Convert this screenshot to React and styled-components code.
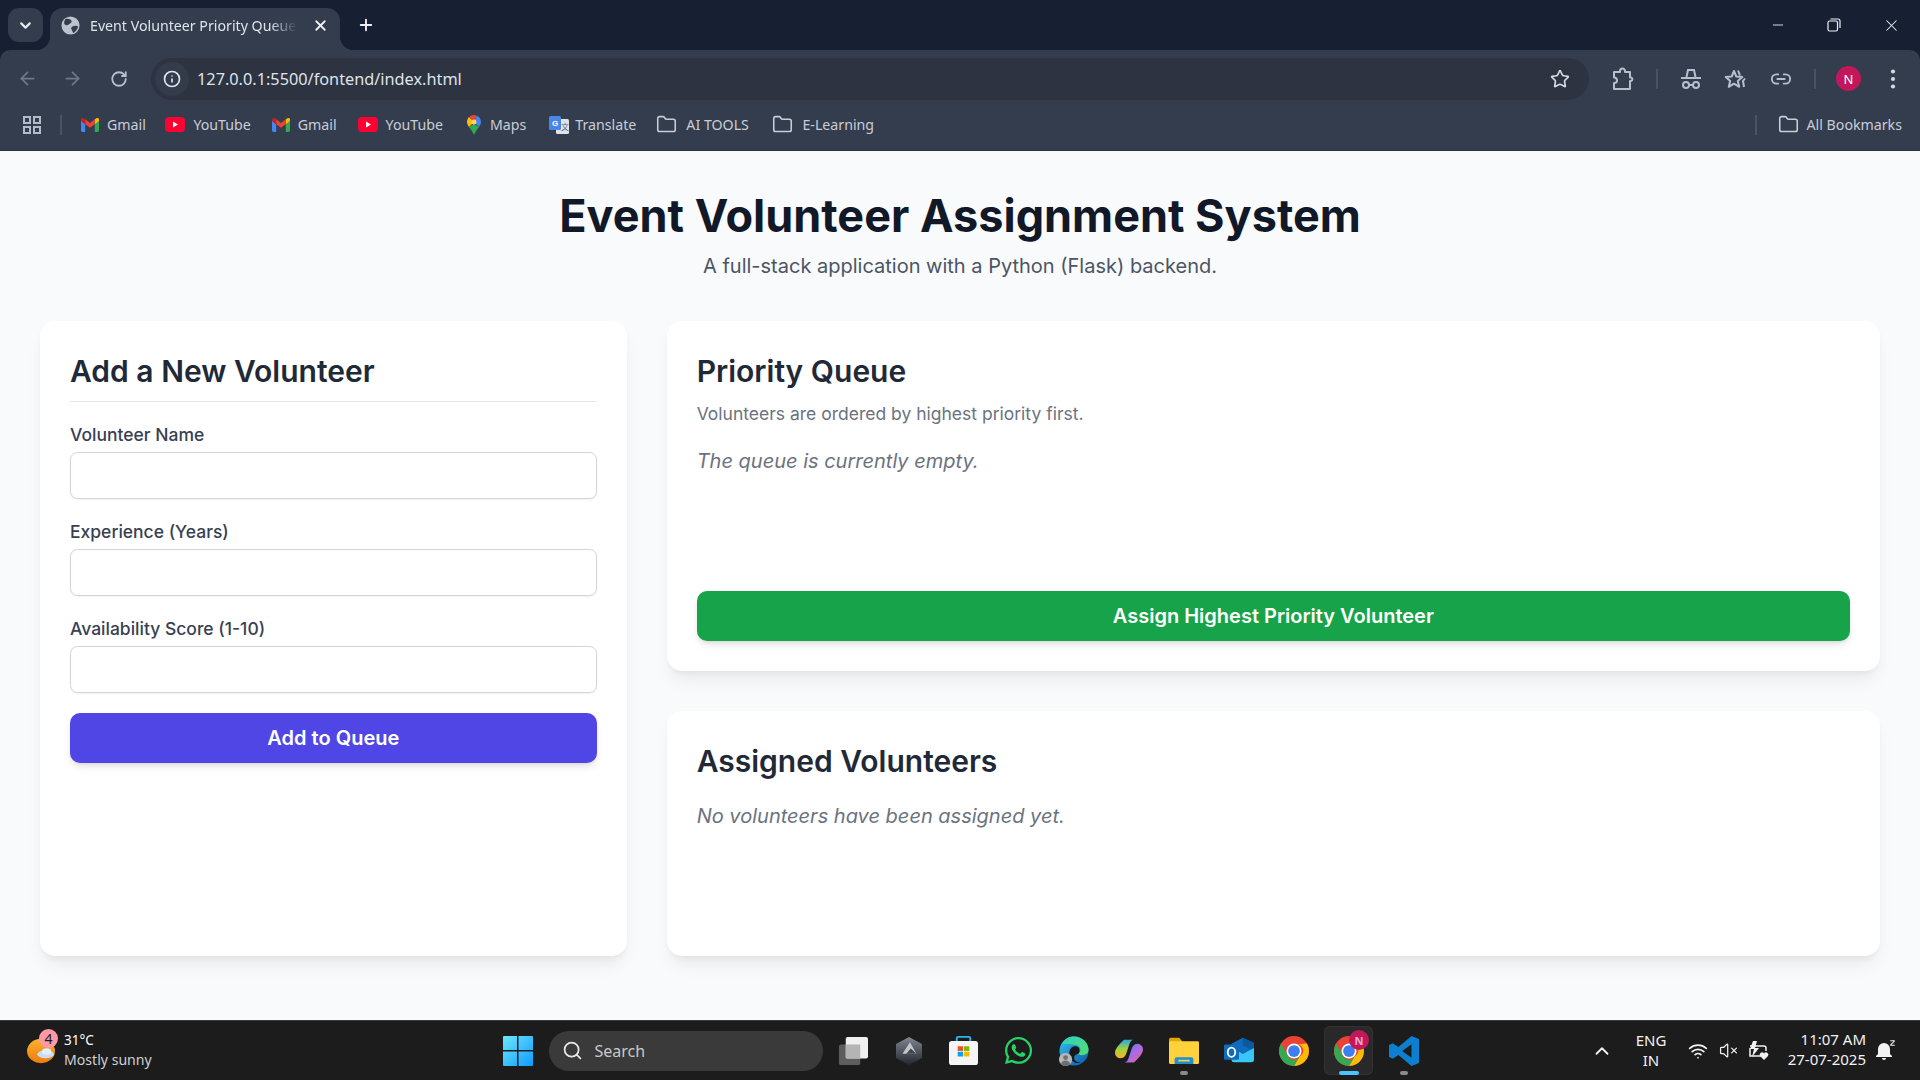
import React from "react";
import styled, { createGlobalStyle } from "styled-components";
import { ArrowLeft, ArrowRight, RotateCw, Info, Star, Link2, X, Plus, ChevronDown, ChevronUp, Minus, Search, Wifi, VolumeX, Folder } from "lucide-react";
import { FaWhatsapp } from "react-icons/fa";

const Global = createGlobalStyle`
  html, body { margin: 0; padding: 0; height: 100%; overflow: hidden; }
  * { box-sizing: border-box; }
  #root { height: 100%; }
`;

const Screen = styled.div`
  width: 1920px; height: 1080px; display: flex; flex-direction: column; overflow: hidden;
  background: #f9fafb; font-family: Inter, "Liberation Sans", sans-serif;
`;

/* browser chrome */
const BrowserFrame = styled.div`
  flex: none; background: #172033; display: flex; flex-direction: column;
`;
const TabStrip = styled.div`
  height: 50px; flex: none; display: flex; align-items: flex-end; padding-left: 8px;
  font-family: "Noto Sans", "Open Sans", sans-serif;
`;
const TabSearch = styled.button`
  width: 35px; height: 34px; margin-bottom: 8px; border: 0; border-radius: 11px; background: #343d4e; color: #e6e9ef;
  display: flex; align-items: center; justify-content: center; padding: 0;
`;
const Tab = styled.div`
  position: relative; width: 290px; height: 42px; margin-left: 7px; background: #343d4e; border-radius: 13px 13px 0 0;
  display: flex; align-items: center; padding: 0 11px 8px 11px; color: #dfe3ea; font-size: 14.2px;
  &::before, &::after { content: ""; position: absolute; bottom: 0; width: 14px; height: 14px; }
  &::before { left: -14px; background: radial-gradient(circle at 0 0, transparent 14px, #343d4e 14.5px); }
  &::after { right: -14px; background: radial-gradient(circle at 100% 0, transparent 14px, #343d4e 14.5px); }
`;
const TabTitle = styled.span`
  flex: 1; margin-left: 10px; margin-right: 8px; white-space: nowrap; overflow: hidden;
  -webkit-mask-image: linear-gradient(90deg, #000 84%, transparent 97%);
  mask-image: linear-gradient(90deg, #000 84%, transparent 97%);
`;
const NewTab = styled.div`
  margin: 0 0 10px 16px; width: 20px; height: 30px; display: flex; align-items: center; justify-content: center; color: #eef0f4;
`;
const WindowControls = styled.div`
  margin-left: auto; height: 50px; display: flex; align-items: center; padding-right: 19px; gap: 41px; color: #f2f4f7;
`;
const Toolbar = styled.div`
  height: 51px; flex: none; background: #343d4e; display: flex; align-items: center; padding: 6px 0 0 15.5px;
  border-radius: 10px 10px 0 0; color: #aeb6c4; font-family: "Noto Sans", sans-serif;
`;
const NavButton = styled.div`
  width: 24px; margin-left: ${p => p.$ml || 0}px; height: 24px; display: flex; align-items: center; justify-content: center;
  flex: none; color: ${p => p.$dim ? "#6f7889" : "#b7bfcc"};
`;
const Omnibox = styled.div`
  width: 1438px; height: 42px; margin-left: 20.5px; flex: none; border-radius: 21px; background: #2d3341; display: flex; align-items: center; padding: 0 17px 0 4px;
`;
const InfoBadge = styled.div`
  width: 34px; height: 34px; border-radius: 50%; background: #343b4a; margin-right: 8px; display: flex; align-items: center; justify-content: center; color: #e3e6ec; flex: none;
`;
const Url = styled.span`
  color: #dfe3ea; font-size: 16.3px; flex: 1; white-space: nowrap;
`;
const Divider = styled.div`
  width: 2px; height: ${p => p.$h || 20}px; background: #4a5264; flex: none; margin: ${p => p.$m || "0"};
`;
const Avatar = styled.div`
  width: 25px; height: 25px; border-radius: 50%; background: #c2185b; color: #fff; font-size: 13px; display: flex; align-items: center; justify-content: center;
  flex: none;
`;
const BookmarksBar = styled.div`
  height: 50px; flex: none; background: #343d4e; display: flex; align-items: center; padding: 0 18px 2px 22px; color: #c8cdd6;
  font-family: "Noto Sans", sans-serif; font-size: 14.2px; border-bottom: 1px solid #2d3341;
`;
const Bookmark = styled.div`
  display: flex; align-items: center; gap: ${p => p.$gap || 8}px; margin-left: ${p => p.$ml || 0}px; white-space: nowrap; flex: none;
`;
const Spacer = styled.div`flex: 1;`;

/* page */
const Page = styled.main`
  flex: 1; min-height: 0; padding: 40px 40px 0; background: #f9fafb; color: #1f2937;
`;
const Header = styled.header`
  text-align: center; margin-bottom: 40px;
`;
const Title = styled.h1`
  margin: 0; font-size: 45px; line-height: 50px; font-weight: 700; color: #111827;
`;
const Subtitle = styled.p`
  margin: 10px 0 0; font-size: 20px; line-height: 30px; color: #4b5563;
`;
const Grid = styled.div`
  display: grid; grid-template-columns: repeat(3, 1fr); gap: 40px;
`;
const Card = styled.section`
  background: #fff; border-radius: 15px; padding: 30px; box-shadow: 0 12px 18px -4px rgba(0,0,0,.07), 0 4px 7px -3px rgba(0,0,0,.06);
  min-height: ${p => p.$minH || 0}px; display: flex; flex-direction: column;
`;
const Column = styled.div`
  grid-column: span 2; display: flex; flex-direction: column; gap: 40px;
`;
const CardTitle = styled.h2`
  margin: 0 0 ${p => p.$mb ?? 10}px; font-size: 30px; line-height: 40px; font-weight: 600; color: #1f2937;
  ${p => p.$ruled && "padding-bottom: 10px; border-bottom: 1.25px solid #e5e7eb; margin-bottom: 20px;"}
`;
const Form = styled.form`
  display: flex; flex-direction: column; gap: 20px;
`;
const Field = styled.div`
  display: flex; flex-direction: column; gap: 5px;
`;
const Label = styled.label`
  font-size: 17.5px; line-height: 25px; font-weight: 500; color: #374151;
`;
const Input = styled.input`
  height: 47px; width: 100%; border: 1.25px solid #d1d5db; border-radius: 7.5px; background: #fff;
  box-shadow: 0 1px 2px rgba(0,0,0,.05);
`;
const ActionButton = styled.button`
  height: 50px; width: 100%; border: 0; border-radius: 10px; background: ${p => p.$bg}; color: #fff; font-family: inherit;
  font-size: 20px; font-weight: 600; box-shadow: 0 5px 8px -2px rgba(0,0,0,.12), 0 2px 4px -2px rgba(0,0,0,.1); flex: none;
  margin-top: ${p => p.$mt || 0}px;
`;
const Hint = styled.p`
  margin: 0; font-size: 17.5px; line-height: 25px; color: #6b7280;
`;
const Empty = styled.p`
  margin: ${p => p.$mt || 0}px 0 0; font-size: 20px; line-height: 30px; font-style: italic; color: #6b7280;
`;

/* taskbar */
const Taskbar = styled.footer`
  height: 60px; flex: none; background: #1c1c1c; border-top: 1px solid #3a3a3a; display: flex; align-items: center; color: #fff;
  font-family: "Noto Sans", "Open Sans", sans-serif; padding-left: 27px;
`;
const Weather = styled.div`
  width: 475.5px; flex: none; display: flex; align-items: center; gap: 9px; position: relative;
`;
const WeatherBadge = styled.span`
  position: absolute; left: 12px; top: -3px; width: 19px; height: 19px; border-radius: 50%; background: #ff99a4; color: #1c1c1c; font-size: 14px;
  display: flex; align-items: center; justify-content: center;
`;
const WeatherText = styled.div`
  display: flex; flex-direction: column; font-size: 14.1px; line-height: 20px; color: #cfcfcf; margin-top: -2px;
  b { font-weight: 400; color: #fff; font-size: 13.5px; }
`;
const StartIcon = styled.div`
  width: 30px; height: 30px; flex: none; display: flex; margin-right: 16px;
`;
const SearchPill = styled.div`
  width: 274px; height: 40px; border-radius: 20px; background: #3a3a3a; display: flex; align-items: center; gap: 12px; padding-left: 13px;
  color: #c9c9c9; font-size: 16px; flex: none; margin-right: .5px;
`;
const TaskItem = styled.div`
  position: relative; width: 49px; height: 49px; margin-left: 6px; flex: none; display: flex; align-items: center; justify-content: center; border-radius: 6px;
  background: ${p => p.$active ? "#292929" : "transparent"};
  ${p => p.$active && "box-shadow: inset 0 0 0 1px #323232;"}
  ${p => (p.$active || p.$running) && `
    &::after { content: ""; position: absolute; bottom: 0; left: 50%; transform: translateX(-50%); height: 4px; border-radius: 2px;
      width: ${p.$active ? 20 : 8}px; background: ${p.$active ? "#4cc2ff" : "#8a8a8a"}; }
  `}
`;
const TaskBadge = styled.span`
  position: absolute; right: 4px; top: 4px; width: 20px; height: 20px; border-radius: 50%; background: #c2185b; color: #f5a9c6; font-size: 11px; font-weight: 700;
  display: flex; align-items: center; justify-content: center;
`;
const Tray = styled.div`
  margin-left: auto; display: flex; align-items: center; padding-right: 24px; color: #f2f2f2;
`;
const Lang = styled.div`
  width: 40px; margin: -2px 14px 0 17px; text-align: center; font-size: 15px; line-height: 20px;
`;
const Clock = styled.div`
  width: 84px; margin: -4px 10px 0 11px; text-align: right; font-size: 15px; line-height: 20px; white-space: nowrap;
`;
const TrayIcon = styled.div`
  width: ${p => p.$w || 24}px; margin-right: ${p => p.$mr || 0}px; display: flex; align-items: center; justify-content: center; flex: none;
`;

/* drawings */
const Globe = () => (
  <svg width="19" height="19" viewBox="0 0 20 20">
    <circle cx="10" cy="10" r="9.5" fill="#bcc3cf" />
    <path d="M5 3c2 0 5 0 6 2s-2 3-3 4-3 1-4 0-1-4 1-6zM12 11c2-1 5-1 6 0-.5 3-3 6-5 7-1-1-1-3-2-4s0-2 1-3z" fill="#343d4e" />
  </svg>
);
const Gmail = () => (
  <svg width="18" height="14" viewBox="0 0 18 14">
    <path d="M0 2.500V12.600c0 .8.6 1.400 1.300 1.400h2.900V6.200z" fill="#4285f4" />
    <path d="M13.800 6.200V14h2.900c.7 0 1.300-.6 1.300-1.400V2.500z" fill="#34a853" />
    <path d="M13.800 1.200v5L18 2.900V1.600C18 .2 16.500-.5 15.500.3z" fill="#fbbc04" />
    <path d="M4.200 6.200V1.200L9 4.900l4.800-3.700v5L9 9.800z" fill="#ea4335" />
    <path d="M0 1.600v1.300l4.200 3.300v-5L2.500.3C1.500-.5 0 .2 0 1.600z" fill="#c5221f" />
  </svg>
);
const YouTube = () => (
  <svg width="20" height="15" viewBox="0 0 20 15">
    <rect width="20" height="15" rx="4" fill="#ff0033" />
    <path d="M8 4.500v6l5-3z" fill="#fff" />
  </svg>
);
const Maps = () => (
  <svg width="14" height="20" viewBox="0 0 14 20">
    <path d="M7 20c-1-3-3-5-5-8l5-3 5 3c-2 3-4 5-5 8z" fill="#34a853" />
    <path d="M2 12C.6 10 0 8.500 0 7c0-2 .8-3.600 2-4.900L7 7z" fill="#fbbc04" />
    <path d="M2 2.100C3.300.8 5 0 7 0c1 0 2 .2 3 .7L7 7z" fill="#ea4335" />
    <path d="M10 .7C12.400 1.800 14 4.200 14 7c0 1.800-1 3.400-2 5L7 7z" fill="#4285f4" />
    <circle cx="7" cy="7" r="2.500" fill="#fdd663" />
  </svg>
);
const Translate = () => (
  <svg width="20" height="20" viewBox="0 0 20 20">
    <rect x="7" y="4" width="13" height="15" rx="1.500" fill="#dfe3ea" />
    <rect x="0" y="1" width="12" height="14" rx="1.500" fill="#4a86e8" />
    <text x="3" y="11" fontSize="8" fontWeight="700" fill="#fff" fontFamily="Liberation Sans, sans-serif">G</text>
    <text x="12" y="15" fontSize="8" fill="#5f6368" fontFamily="Noto Sans CJK SC, sans-serif">文</text>
  </svg>
);
const AppsGrid = () => (
  <svg width="20" height="20" viewBox="0 0 20 20" fill="none" stroke="#b4bbc8" strokeWidth="2">
    <rect x="2" y="2" width="6" height="6" /><rect x="12" y="2" width="6" height="6" />
    <rect x="2" y="12" width="6" height="6" /><rect x="12" y="12" width="6" height="6" />
  </svg>
);
const Extension = () => (
  <svg width="22" height="24" viewBox="0 0 22 24" fill="none" stroke="#b7bfcc" strokeWidth="2" strokeLinejoin="round">
    <path d="M2 5h6V4a2.500 2.500 0 0 1 5 0v1h5v5.500h1a1.800 1.800 0 0 1 0 3.500h-1v8H2v-6c2 0 3-1 3-2.500S4 10.500 2 10.500z" />
  </svg>
);
const Incognito = () => (
  <svg width="22" height="22" viewBox="0 0 22 22" fill="none" stroke="#b7bfcc" strokeWidth="2">
    <path d="M6.500 9l1.500-7h6l1.500 7" />
    <path d="M1 10h20" /><circle cx="6" cy="17" r="3" /><circle cx="16" cy="17" r="3" /><path d="M9 17h4" />
  </svg>
);
const FavStar = () => (
  <svg width="24" height="24" viewBox="0 0 24 24" fill="none" stroke="#b7bfcc" strokeWidth="2" strokeLinejoin="round">
    <path d="M10 4l2.300 5.500 6 .5-4.500 4 1.400 5.800L10 16.700l-5.200 3.100 1.400-5.800-4.500-4 6-.5z" />
    <path d="M14 3.500l2 5 M21 11.500l-2 2.500 1 6" />
  </svg>
);
const Dots = () => (
  <svg width="6" height="22" viewBox="0 0 6 22" fill="#d4d8df">
    <circle cx="3" cy="3.500" r="2.100" /><circle cx="3" cy="11" r="2.100" /><circle cx="3" cy="18.500" r="2.100" />
  </svg>
);
const Restore = () => (
  <svg width="14" height="14" viewBox="0 0 14 14" fill="none" stroke="#f2f4f7" strokeWidth="1.200">
    <rect x="1" y="3" width="9.500" height="10" rx="1.500" /><path d="M3.500 1h7.500a2 2 0 0 1 2 2v7" />
  </svg>
);
const Sun = () => (
  <svg width="28" height="26" viewBox="0 0 30 32" preserveAspectRatio="none">
    <defs><linearGradient id="sun" x1="0" y1="0" x2="0" y2="1"><stop offset="0" stopColor="#f7b32b" /><stop offset="1" stopColor="#f07a10" /></linearGradient></defs>
    <circle cx="15" cy="16" r="15" fill="url(#sun)" />
    <ellipse cx="20" cy="20" rx="9" ry="5" fill="#c9dcf2" />
    <ellipse cx="21" cy="16.500" rx="5" ry="4" fill="#e4eefa" />
  </svg>
);
const WinLogo = () => (
  <svg width="30" height="30" viewBox="0 0 30 30">
    <defs><linearGradient id="win" x1="0" y1="0" x2="1" y2="1"><stop offset="0" stopColor="#6de6fb" /><stop offset="1" stopColor="#0f9bff" /></linearGradient></defs>
    <path d="M1 0h13v14H0V1a1 1 0 0 1 1-1zM15.500 0H29a1 1 0 0 1 1 1v13H15.500zM0 15.500h14V30H1a1 1 0 0 1-1-1zM15.500 15.500H30V29a1 1 0 0 1-1 1H15.500z" fill="url(#win)" />
  </svg>
);
const TaskView = () => (
  <svg width="29" height="28" viewBox="0 0 30 30" preserveAspectRatio="none">
    <rect x="0" y="8" width="22" height="22" rx="2" fill="#5d5d5d" />
    <rect x="7" y="0" width="23" height="23" rx="2" fill="#f0f0f0" />
    <rect x="7" y="8" width="15" height="15" fill="#b4b4b4" />
  </svg>
);
const HexApp = () => (
  <svg width="26" height="28" viewBox="0 0 28 32" preserveAspectRatio="none">
    <defs><linearGradient id="hex" x1="0" y1="0" x2="0" y2="1"><stop offset="0" stopColor="#7f8793" /><stop offset="1" stopColor="#24272c" /></linearGradient></defs>
    <path d="M14 0l14 8v16l-14 8-14-8V8z" fill="url(#hex)" />
    <path d="M15 6l7 13H7z" fill="#c2c7ce" /><path d="M16 13l6 6H11z" fill="#41454c" />
  </svg>
);
const Store = () => (
  <svg width="29" height="29" viewBox="0 0 30 34" preserveAspectRatio="none">
    <path d="M8 7V2.500A1.500 1.500 0 0 1 9.500 1h11A1.500 1.500 0 0 1 22 2.500V7" fill="none" stroke="#2bb4ee" strokeWidth="2" />
    <rect y="6" width="30" height="28" rx="3" fill="#f4f4f4" />
    <rect x="9" y="12" width="5.500" height="5.500" fill="#f25022" /><rect x="15.500" y="12" width="5.500" height="5.500" fill="#7fba00" />
    <rect x="9" y="18.500" width="5.500" height="5.500" fill="#00a4ef" /><rect x="15.500" y="18.500" width="5.500" height="5.500" fill="#ffb900" />
  </svg>
);
const Edge = () => (
  <svg width="30" height="30" viewBox="0 0 32 32">
    <defs>
      <linearGradient id="edgeA" x1="0" y1="0" x2="1" y2="1"><stop offset="0" stopColor="#35c1f1" /><stop offset="1" stopColor="#0c59a4" /></linearGradient>
      <linearGradient id="edgeB" x1="0" y1="0" x2="1" y2="1"><stop offset="0" stopColor="#2fd0c0" /><stop offset="1" stopColor="#54e06f" /></linearGradient>
    </defs>
    <circle cx="16" cy="16" r="15.500" fill="url(#edgeA)" />
    <path d="M3 9C6 2 12 .5 16 .5c9 0 15.500 7 15.500 14 0 4-3 6-7 6-3 0-4-1-4-2 4-2 3-8-3-9C11 8.500 6 8 3 9z" fill="url(#edgeB)" />
    <path d="M11 18c0-5 4-8 8-7 3 1 4 6 1.500 8-3 1-5 2-4 6 .5 1.500 3 3 6 3-5 3-12-3-11.500-10z" fill="#18181b" />
    <circle cx="7" cy="25" r="7" fill="#b8b8b8" /><circle cx="7" cy="23" r="2.600" fill="#6f6f6f" /><path d="M2 30c1-3 2.500-4 5-4s4 1 5 4c-3 2.500-7 2.500-10 0z" fill="#6f6f6f" />
  </svg>
);
const Copilot = () => (
  <svg width="28" height="26" viewBox="0 0 28 32" preserveAspectRatio="none">
    <defs>
      <linearGradient id="copA" x1="0" y1="0" x2="0" y2="1"><stop offset="0" stopColor="#27a7e8" /><stop offset=".5" stopColor="#a5d13b" /><stop offset="1" stopColor="#f7b32b" /></linearGradient>
      <linearGradient id="copB" x1="0" y1="0" x2="1" y2="1"><stop offset="0" stopColor="#3d7df0" /><stop offset=".5" stopColor="#a76ce8" /><stop offset="1" stopColor="#f06292" /></linearGradient>
    </defs>
    <path d="M9 2h10c-3 0-4 3-5 7l-3 11c-1 3-3 5-6 5-3-1-5-3-5-7 0-5 4-10 9-16z" fill="url(#copA)" />
    <path d="M19 30H9c3 0 4-3 5-7l3-11c1-3 3-5 6-5 3 1 5 3 5 7 0 5-4 10-9 16z" fill="url(#copB)" />
  </svg>
);
const Explorer = () => (
  <svg width="30" height="27" viewBox="0 0 32 32" preserveAspectRatio="none">
    <path d="M0 3a2 2 0 0 1 2-2h9l3 4h0V12H0z" fill="#e0a800" />
    <rect y="5" width="32" height="27" rx="1.500" fill="#ffd23c" />
    <path d="M6 32v-6a2 2 0 0 1 2-2h16a2 2 0 0 1 2 2v6z" fill="#1f8fd1" /><rect x="10" y="27" width="12" height="2" fill="#ffd23c" />
  </svg>
);
const Outlook = () => (
  <svg width="30" height="27" viewBox="0 0 32 32" preserveAspectRatio="none">
    <path d="M8 8l12-7 12 6v14l-11 6H8z" fill="#0f6cbd" />
    <path d="M20 1l12 6v10l-12-7z" fill="#0a5aa0" />
    <path d="M8 12l12 8 12-7v14a3 3 0 0 1-3 3H11a3 3 0 0 1-3-3z" fill="#38c8f5" />
    <rect x="0" y="9" width="16" height="18" rx="1.500" fill="#0f6cbd" />
    <ellipse cx="8" cy="18" rx="4" ry="5.500" fill="none" stroke="#fff" strokeWidth="2" />
  </svg>
);
const Chrome = ({ size = 30 }) => (
  <svg width={size} height={size} viewBox="0 0 24 24">
    <circle cx="12" cy="12" r="12" fill="#ea4335" />
    <path d="M22.390 6A12 12 0 0 1 12 24l4.330-7.500A5 5 0 0 0 12 7z" fill="#fbbc04" />
    <path d="M1.610 6l6.060 10.500a5 5 0 0 0 8.660 0L12 24A12 12 0 0 1 1.610 6z" fill="#34a853" />
    <circle cx="12" cy="12" r="6" fill="#fff" /><circle cx="12" cy="12" r="4.700" fill="#3d7ff0" />
  </svg>
);
const VSCode = () => (
  <svg width="30" height="30" viewBox="0 0 24 27" preserveAspectRatio="none">
    <path d="M18 0l6 2.800v21.400L18 27 7.500 17l-4.500 3.400L0 18.800V8.200l3-1.600L7.500 10zM18 7.500L10.500 13.500 18 19.500z" fill="#0d7fd0" fillRule="evenodd" />
  </svg>
);
const Battery = () => (
  <svg width="22" height="20" viewBox="0 0 22 20" fill="none" stroke="#f2f2f2" strokeWidth="1.500">
    <path d="M2 5h14a2 2 0 0 1 2 2v3M14 15H2V7" /><path d="M5 0L2 8h4l-2 8 7-9H7l2-7z" fill="#f2f2f2" stroke="none" />
    <path d="M16 19l-4-4a2.300 2.300 0 0 1 4-2.500 2.300 2.300 0 0 1 4 2.500z" fill="#f2f2f2" stroke="none" />
  </svg>
);
const Bell = () => (
  <svg width="20" height="22" viewBox="0 0 20 22" fill="#f2f2f2">
    <path d="M8 3a6 6 0 0 0-6 6v5l-2 2v1h16v-1l-2-2V9a6 6 0 0 0-6-6zM6 18a2 2 0 0 0 4 0z" />
    <path d="M14 0h5v1.500l-3 3h3V6h-5V4.500l3-3h-3z" stroke="#1c1c1c" strokeWidth=".5" />
  </svg>
);

export default function App() {
  return (
    <Screen>
      <Global />
      <BrowserFrame>
        <TabStrip>
          <TabSearch><ChevronDown size={17} strokeWidth={3} /></TabSearch>
          <Tab>
            <Globe />
            <TabTitle>Event Volunteer Priority Queue</TabTitle>
            <X size={17} strokeWidth={2.5} color="#eef0f4" />
          </Tab>
          <NewTab><Plus size={18} strokeWidth={2.5} /></NewTab>
          <WindowControls>
            <Minus size={16} strokeWidth={1.3} />
            <Restore />
            <X size={19} strokeWidth={1.3} />
          </WindowControls>
        </TabStrip>
        <Toolbar>
          <NavButton $dim><ArrowLeft size={21} /></NavButton>
          <NavButton $dim $ml={21}><ArrowRight size={21} /></NavButton>
          <NavButton $ml={22}><RotateCw size={18} strokeWidth={2.4} /></NavButton>
          <Omnibox>
            <InfoBadge><Info size={18} strokeWidth={2.2} /></InfoBadge>
            <Url>127.0.0.1:5500/fontend/index.html</Url>
            <NavButton><Star size={20} strokeWidth={2} color="#d4d8df" /></NavButton>
          </Omnibox>
          <NavButton $ml={22}><Extension /></NavButton>
          <Divider $h={20} $m="0 21px" />
          <NavButton><Incognito /></NavButton>
          <NavButton $ml={21}><FavStar /></NavButton>
          <NavButton $ml={21}><Link2 size={22} strokeWidth={2} /></NavButton>
          <Divider $h={20} $m="0 20px 0 21px" />
          <Avatar>N</Avatar>
          <NavButton $ml={19.5}><Dots /></NavButton>
        </Toolbar>
        <BookmarksBar>
          <AppsGrid />
          <Divider $h={20} $m="0 0 0 18px" />
          <Bookmark $ml={19}><Gmail /><span>Gmail</span></Bookmark>
          <Bookmark $ml={19.500}><YouTube /><span>YouTube</span></Bookmark>
          <Bookmark $ml={21}><Gmail /><span>Gmail</span></Bookmark>
          <Bookmark $ml={21}><YouTube /><span>YouTube</span></Bookmark>
          <Bookmark $ml={24} $gap={9}><Maps /><span>Maps</span></Bookmark>
          <Bookmark $ml={23} $gap={6}><Translate /><span>Translate</span></Bookmark>
          <Bookmark $ml={20} $gap={9}><Folder size={21} strokeWidth={1.8} /><span>AI TOOLS</span></Bookmark>
          <Bookmark $ml={23.500} $gap={9}><Folder size={21} strokeWidth={1.8} /><span>E-Learning</span></Bookmark>
          <Spacer />
          <Divider $h={20} />
          <Bookmark $ml={21}><Folder size={21} strokeWidth={1.8} /><span>All Bookmarks</span></Bookmark>
        </BookmarksBar>
      </BrowserFrame>
      <Page>
        <Header>
          <Title>Event Volunteer Assignment System</Title>
          <Subtitle>A full-stack application with a Python (Flask) backend.</Subtitle>
        </Header>
        <Grid>
          <Card>
            <CardTitle $ruled>Add a New Volunteer</CardTitle>
            <Form>
              <Field><Label>Volunteer Name</Label><Input /></Field>
              <Field><Label>Experience (Years)</Label><Input /></Field>
              <Field><Label>Availability Score (1-10)</Label><Input /></Field>
              <ActionButton type="button" $bg="#4f46e5">Add to Queue</ActionButton>
            </Form>
          </Card>
          <Column>
            <Card>
              <CardTitle>Priority Queue</CardTitle>
              <Hint>Volunteers are ordered by highest priority first.</Hint>
              <Empty $mt={20}>The queue is currently empty.</Empty>
              <ActionButton type="button" $bg="#16a34a" $mt={115}>Assign Highest Priority Volunteer</ActionButton>
            </Card>
            <Card $minH={245}>
              <CardTitle $mb={20}>Assigned Volunteers</CardTitle>
              <Empty>No volunteers have been assigned yet.</Empty>
            </Card>
          </Column>
        </Grid>
      </Page>
      <Taskbar>
        <Weather>
          <Sun />
          <WeatherBadge>4</WeatherBadge>
          <WeatherText><b>31°C</b><span>Mostly sunny</span></WeatherText>
        </Weather>
        <StartIcon><WinLogo /></StartIcon>
        <SearchPill><Search size={21} strokeWidth={2} color="#e8e8e8" /><span>Search</span></SearchPill>
        <TaskItem><TaskView /></TaskItem>
        <TaskItem><HexApp /></TaskItem>
        <TaskItem><Store /></TaskItem>
        <TaskItem><FaWhatsapp size={31} color="#25d366" /></TaskItem>
        <TaskItem><Edge /></TaskItem>
        <TaskItem><Copilot /></TaskItem>
        <TaskItem $running><Explorer /></TaskItem>
        <TaskItem><Outlook /></TaskItem>
        <TaskItem><Chrome /></TaskItem>
        <TaskItem $active><Chrome /><TaskBadge>N</TaskBadge></TaskItem>
        <TaskItem $running><VSCode /></TaskItem>
        <Tray>
          <TrayIcon><ChevronUp size={22} strokeWidth={2} /></TrayIcon>
          <Lang>ENG<br />IN</Lang>
          <TrayIcon $w={26} $mr={5}><Wifi size={20} strokeWidth={2} /></TrayIcon>
          <TrayIcon $w={24} $mr={7}><VolumeX size={19} strokeWidth={1.6} /></TrayIcon>
          <TrayIcon $w={24}><Battery /></TrayIcon>
          <Clock>11:07 AM<br />27-07-2025</Clock>
          <TrayIcon $w={20}><Bell /></TrayIcon>
        </Tray>
      </Taskbar>
    </Screen>
  );
}
